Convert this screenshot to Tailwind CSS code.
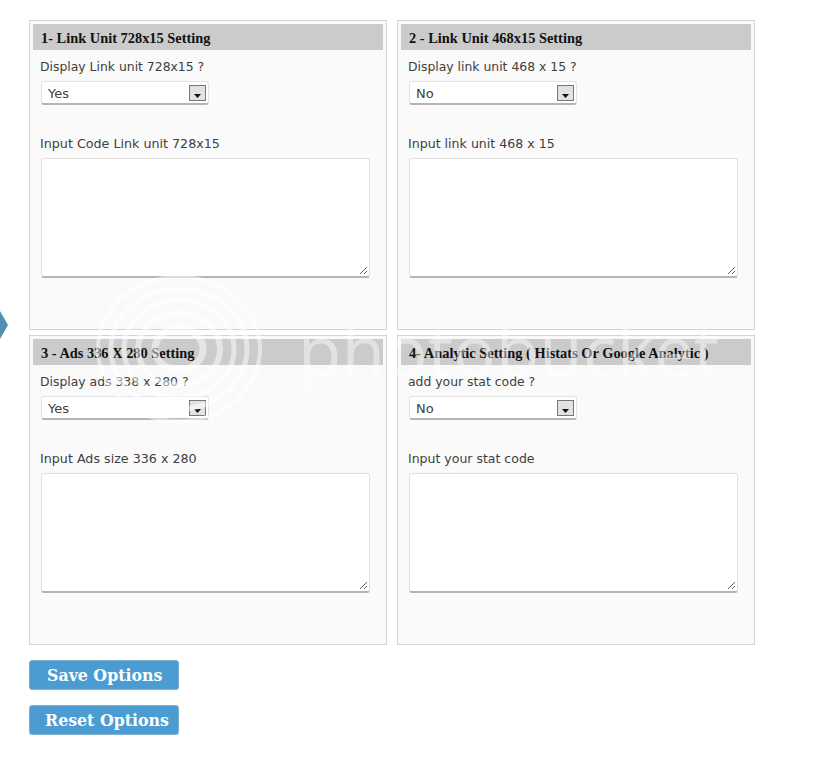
<!DOCTYPE html>
<html><head><meta charset="utf-8"><script src="https://cdn.jsdelivr.net/npm/@tailwindcss/browser@4"></script></head>
<body class="bg-white">
<div class="relative w-[825px] h-[760px] overflow-hidden bg-white font-['DejaVu_Sans','Liberation_Sans',sans-serif] text-[12.4px] text-[#404040]">
  <div class="pl-[29px] pt-[20px]">
    <div class="grid grid-cols-[358px_358px] gap-x-[10px] gap-y-[5px] w-max">

      <section class="h-[310px] border border-[#d4d4d4] bg-[#fafafa] p-[3px]">
        <h3 class="h-[26px] bg-[#cbcbcb] pl-[8px] font-['Liberation_Serif',serif] font-bold text-[14.4px] leading-[29px] text-[#111]">1- Link Unit 728x15 Setting</h3>
        <p class="mt-[7px] pl-[7px] leading-[20px]">Display Link unit 728x15 ?</p>
        <div class="ml-[8px] mt-[4px] w-[168px] h-[24px] rounded-[3px] bg-white border border-[#e3e3e3] border-b-2 border-b-[#b5b5b5] flex items-center justify-between pl-[6px] pr-[2px] text-[13px]"><span class="pt-[2px]">Yes</span><span class="w-[17px] h-[16px] bg-[#e2e2e2] border border-[#777] flex items-end justify-center pb-[2px]"><svg width="7" height="4" viewBox="0 0 7 4"><path d="M0 0H7L3.5 4Z" fill="#111"/></svg></span></div>
        <p class="mt-[29px] pl-[7px] leading-[20px] text-[12.7px]">Input Code Link unit 728x15</p>
        <div class="relative ml-[8px] mt-[4px] w-[329px] h-[120px] rounded-[3px] bg-white border border-[#e0e0e0] border-b-2 border-b-[#b5b5b5]"><svg class="absolute right-[1px] bottom-[1px]" width="9" height="9" viewBox="0 0 9 9"><path d="M1 8L8 1M5 8L8 5" stroke="#666" stroke-width="1"/></svg></div>
      </section>

      <section class="h-[310px] border border-[#d4d4d4] bg-[#fafafa] p-[3px]">
        <h3 class="h-[26px] bg-[#cbcbcb] pl-[8px] font-['Liberation_Serif',serif] font-bold text-[14.4px] leading-[29px] text-[#111]">2 - Link Unit 468x15 Setting</h3>
        <p class="mt-[7px] pl-[7px] leading-[20px]">Display link unit 468 x 15 ?</p>
        <div class="ml-[8px] mt-[4px] w-[168px] h-[24px] rounded-[3px] bg-white border border-[#e3e3e3] border-b-2 border-b-[#b5b5b5] flex items-center justify-between pl-[6px] pr-[2px] text-[13px]"><span class="pt-[2px]">No</span><span class="w-[17px] h-[16px] bg-[#e2e2e2] border border-[#777] flex items-end justify-center pb-[2px]"><svg width="7" height="4" viewBox="0 0 7 4"><path d="M0 0H7L3.5 4Z" fill="#111"/></svg></span></div>
        <p class="mt-[29px] pl-[7px] leading-[20px] text-[12.6px]">Input link unit 468 x 15</p>
        <div class="relative ml-[8px] mt-[4px] w-[329px] h-[120px] rounded-[3px] bg-white border border-[#e0e0e0] border-b-2 border-b-[#b5b5b5]"><svg class="absolute right-[1px] bottom-[1px]" width="9" height="9" viewBox="0 0 9 9"><path d="M1 8L8 1M5 8L8 5" stroke="#666" stroke-width="1"/></svg></div>
      </section>

      <section class="h-[310px] border border-[#d4d4d4] bg-[#fafafa] p-[3px]">
        <h3 class="h-[26px] bg-[#cbcbcb] pl-[8px] font-['Liberation_Serif',serif] font-bold text-[14.4px] leading-[29px] text-[#111]">3 - Ads 336 X 280 Setting</h3>
        <p class="mt-[7px] pl-[7px] leading-[20px]">Display ads 338 x 280 ?</p>
        <div class="ml-[8px] mt-[4px] w-[168px] h-[24px] rounded-[3px] bg-white border border-[#e3e3e3] border-b-2 border-b-[#b5b5b5] flex items-center justify-between pl-[6px] pr-[2px] text-[13px]"><span class="pt-[2px]">Yes</span><span class="w-[17px] h-[16px] bg-[#e2e2e2] border border-[#777] flex items-end justify-center pb-[2px]"><svg width="7" height="4" viewBox="0 0 7 4"><path d="M0 0H7L3.5 4Z" fill="#111"/></svg></span></div>
        <p class="mt-[29px] pl-[7px] leading-[20px] text-[12.7px]">Input Ads size 336 x 280</p>
        <div class="relative ml-[8px] mt-[4px] w-[329px] h-[120px] rounded-[3px] bg-white border border-[#e0e0e0] border-b-2 border-b-[#b5b5b5]"><svg class="absolute right-[1px] bottom-[1px]" width="9" height="9" viewBox="0 0 9 9"><path d="M1 8L8 1M5 8L8 5" stroke="#666" stroke-width="1"/></svg></div>
      </section>

      <section class="h-[310px] border border-[#d4d4d4] bg-[#fafafa] p-[3px]">
        <h3 class="h-[26px] bg-[#cbcbcb] pl-[8px] font-['Liberation_Serif',serif] font-bold text-[14.4px] leading-[29px] text-[#111]">4- Analytic Setting ( Histats Or Google Analytic )</h3>
        <p class="mt-[7px] pl-[7px] leading-[20px]">add your stat code ?</p>
        <div class="ml-[8px] mt-[4px] w-[168px] h-[24px] rounded-[3px] bg-white border border-[#e3e3e3] border-b-2 border-b-[#b5b5b5] flex items-center justify-between pl-[6px] pr-[2px] text-[13px]"><span class="pt-[2px]">No</span><span class="w-[17px] h-[16px] bg-[#e2e2e2] border border-[#777] flex items-end justify-center pb-[2px]"><svg width="7" height="4" viewBox="0 0 7 4"><path d="M0 0H7L3.5 4Z" fill="#111"/></svg></span></div>
        <p class="mt-[29px] pl-[7px] leading-[20px] text-[12.5px]">Input your stat code</p>
        <div class="relative ml-[8px] mt-[4px] w-[329px] h-[120px] rounded-[3px] bg-white border border-[#e0e0e0] border-b-2 border-b-[#b5b5b5]"><svg class="absolute right-[1px] bottom-[1px]" width="9" height="9" viewBox="0 0 9 9"><path d="M1 8L8 1M5 8L8 5" stroke="#666" stroke-width="1"/></svg></div>
      </section>
    </div>

    <div class="mt-[15px] flex flex-col gap-[15px] items-start font-['DejaVu_Serif',serif] font-bold text-[15.8px] text-white">
      <button class="w-[150px] h-[30px] rounded-[3px] bg-[#4a9cd3] border border-[#7fb0d0] pl-[17px] pt-[1px] text-left">Save Options</button>
      <button class="w-[150px] h-[30px] rounded-[3px] bg-[#4a9cd3] border border-[#7fb0d0] pl-[15px] pt-[1px] text-left">Reset Options</button>
    </div>
  </div>

  <div class="absolute left-0 top-[311px] w-[8px] h-[28px] bg-[#4f8fb0] [clip-path:polygon(0_0,100%_50%,0_100%)]"></div>

  <svg class="absolute left-[89px] top-[269px] pointer-events-none" width="180" height="160" viewBox="0 0 180 160" fill="none" stroke="#fff" stroke-opacity=".5">
    <ellipse cx="90" cy="80" rx="81" ry="72" stroke-width="4"/>
    <ellipse cx="90" cy="80" rx="68" ry="60" stroke-width="5"/>
    <ellipse cx="90" cy="80" rx="55" ry="49" stroke-width="5"/>
    <ellipse cx="90" cy="80" rx="41" ry="36" stroke-width="6"/>
    <ellipse cx="90" cy="80" rx="24" ry="21" stroke-width="7"/>
  </svg>
  <div class="absolute left-[298px] top-[300px] pointer-events-none font-['Open_Sans',sans-serif] text-[71px] leading-[100px] text-white/45">photobucket</div>
</div>
</body></html>
